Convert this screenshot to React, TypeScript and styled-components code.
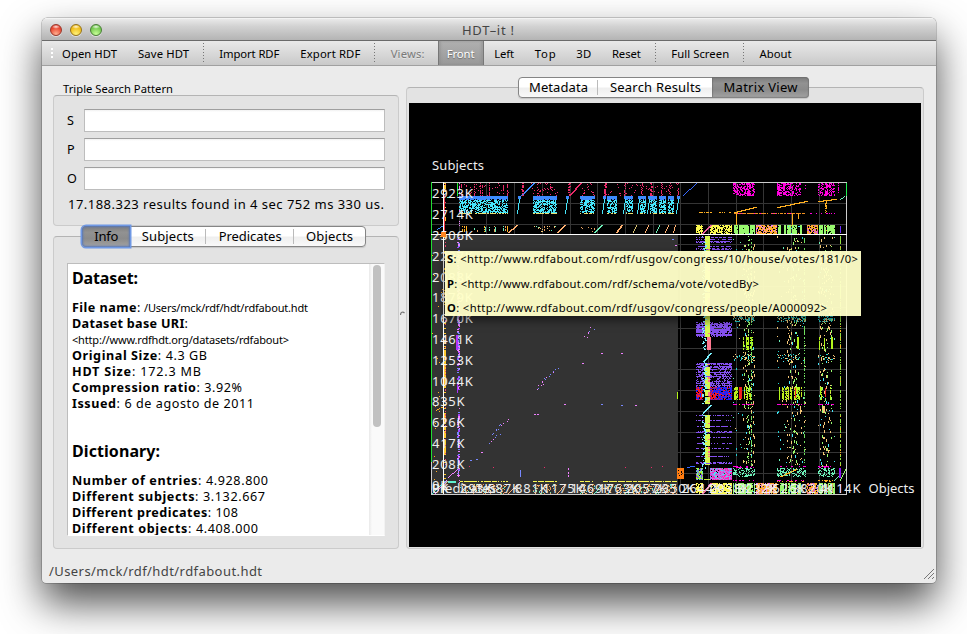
import React, { useLayoutEffect, useRef } from "react";
import styled, { createGlobalStyle } from "styled-components";

const Global = createGlobalStyle`
  * { box-sizing: border-box; }
  html, body { margin: 0; background: #fff; overflow: hidden; }
  body { font-family: "Noto Sans", "Open Sans", sans-serif; font-size: 13px; color: #000; }
`;

/* ---------- text spread to a given width ---------- */

const FitSpan = styled.span<{ $w: number }>`
  display: inline-block;
  width: ${(p) => p.$w}px;
  white-space: pre;
  flex: none;
`;

function Fit({ w, children }: { w: number; children: React.ReactNode }) {
  const ref = useRef<HTMLSpanElement>(null);
  useLayoutEffect(() => {
    const el = ref.current;
    if (!el) return;
    el.style.letterSpacing = "0px";
    const range = document.createRange();
    range.selectNodeContents(el);
    const natural = range.getBoundingClientRect().width;
    const n = (el.textContent || "").length;
    el.style.letterSpacing = `${(w - natural) / Math.max(1, n - 1)}px`;
  }, [w, children]);
  return (
    <FitSpan ref={ref} $w={w}>
      {children}
    </FitSpan>
  );
}

/* ---------- window frame ---------- */

const Desktop = styled.div`
  width: 967px;
  height: 634px;
  padding: 18px 0 0 42px;
  overflow: hidden;
  background: #fff;
`;

const Window = styled.div`
  width: 894px;
  height: 565px;
  display: flex;
  flex-direction: column;
  background: #ebebeb;
  border-radius: 5px 5px 4px 4px;
  overflow: hidden;
  box-shadow: 0 0 0 0.5px rgba(0, 0, 0, 0.35), 0 20px 40px rgba(0, 0, 0, 0.7);
`;

const TitleBar = styled.div`
  height: 23px;
  flex: none;
  display: grid;
  grid-template-columns: 420px auto;
  align-items: center;
  background: linear-gradient(#e9e9e9, #d2d2d2 35%, #b4b4b4);
  border-top: 1px solid #f3f3f3;
  border-bottom: 1px solid #6a6a6a;
  color: #444;
  font-size: 13px;
  line-height: 20px;
`;

const Lights = styled.div`
  display: flex;
  gap: 8px;
  padding: 1px 0 0 8px;
`;

const Light = styled.i<{ $c: string; $glow: string; $edge: string }>`
  width: 12px;
  height: 12px;
  border-radius: 50%;
  border: 1px solid ${(p) => p.$edge};
  background: radial-gradient(ellipse 4px 2px at 50% 18%, #fffd, #fff0),
    radial-gradient(circle at 50% 90%, ${(p) => p.$glow}, ${(p) => p.$c} 65%);
  box-shadow: 0 1px 0 #fff8;
`;

const ToolBar = styled.div`
  height: 25px;
  flex: none;
  display: flex;
  align-items: center;
  gap: 21px;
  padding-left: 10px;
  background: linear-gradient(#e9e9e9, #c9c9c9);
  border-bottom: 1px solid #a0a0a0;
  font-size: 11.3px;
  line-height: 20px;

  & > span {
    padding-top: 2px;
  }
`;

const Grip = styled.div`
  width: 4px;
  height: 12px;
  margin: 0 -13px 0 -2px;
  background: radial-gradient(circle, #fff 0.9px, transparent 1.2px) 0 0 / 4px 4px;
`;

const Separator = styled.div`
  width: 1px;
  height: 20px;
  margin: 0 -5.7px 0 -7px;
  background: repeating-linear-gradient(#777 0 1px, transparent 1px 3px);
`;

const ViewsLabel = styled.span`
  color: #7a7a7a;
  text-shadow: 0 1px #fff6;
`;

const PressedTool = styled.span`
  height: 24px;
  margin: 0 -9px 0 -8px;
  padding: 0 8px;
  line-height: 22px;
  color: #fff;
  text-shadow: 0 1px 1px #666;
  background: linear-gradient(#b0b0b0, #989898);
  border-left: 1px solid #777;
  border-right: 1px solid #777;
  box-shadow: inset 2px 0 2px #8886, inset -2px 0 2px #8886;
`;

const ViewButtons = styled.div`
  display: flex;
  gap: 20.6px;
  padding-top: 2px;
  margin: 0 0 0 -1.5px;
`;

const Body = styled.div`
  display: flex;
  height: 483px;
  flex: none;
  padding-left: 11px;
`;

const StatusBar = styled.div`
  flex: 1;
  display: flex;
  align-items: center;
  justify-content: space-between;
  padding: 9px 1px 0 7px;
  color: #444;
  font-size: 13px;
  line-height: 22px;
`;

const ResizeGrip = styled.svg`
  margin-top: 6px;
`;

/* ---------- panels ---------- */

const LeftColumn = styled.div`
  width: 346px;
  padding-top: 14px;
`;

const GroupTitle = styled.div`
  height: 15px;
  padding-left: 10px;
  font-size: 11.2px;
  line-height: 17px;
`;

const Panel = styled.div<{ $h: number; $pad: string }>`
  height: ${(p) => p.$h}px;
  padding: ${(p) => p.$pad};
  background: #e3e3e3;
  border: 1px solid #cbcbcb;
  border-top-color: #b4b4b4;
  border-radius: 4px;
`;

const Field = styled.label`
  display: flex;
  align-items: center;
  height: 23px;
  margin-bottom: 6px;
  line-height: 20px;
  font-size: 12.6px;
`;

const FieldName = styled.span`
  width: 17px;
`;

const Input = styled.input`
  width: 301px;
  height: 23px;
  padding: 0 4px;
  outline: none;
  border: 1px solid #bdbdbd;
  border-top-color: #9f9f9f;
  background: linear-gradient(#f1f1f1, #fff 2px);
`;

const Result = styled.div`
  height: 20px;
  line-height: 18px;
  margin-top: -1px;
  padding-left: 1px;
  font-size: 13px;
`;

const Tabs = styled.div<{ $ml: number; $w: number }>`
  position: relative;
  z-index: 1;
  display: flex;
  width: ${(p) => p.$w}px;
  height: 21px;
  margin: 0 0 -11px ${(p) => p.$ml}px;
  background: linear-gradient(#fff 45%, #efefef 55%, #f9f9f9);
  border: 1px solid #858585;
  border-radius: 4px;
  box-shadow: 0 1px 1px #0002;
  font-size: 13px;
  line-height: 19px;
`;

const Tab = styled.div<{ $w: number; $on?: boolean; $focus?: boolean; $line?: boolean }>`
  width: ${(p) => p.$w}px;
  height: ${(p) => (p.$on ? 21 : 19)}px;
  margin: ${(p) => (p.$on ? "-1px" : "0")};
  padding-top: ${(p) => (p.$on ? 1 : 0)}px;
  text-align: center;
  white-space: nowrap;
  background: ${(p) =>
    p.$on
      ? "linear-gradient(#7b7b7b, #929292 30%, #8b8b8b 60%, #a3a3a3)"
      : p.$line
      ? "linear-gradient(#bbb, #bbb) 100% 50% / 1px 15px no-repeat"
      : "none"};
  border-radius: ${(p) => (p.$on ? (p.$focus ? "4px 0 0 4px" : "0 4px 4px 0") : "0")};
  box-shadow: ${(p) =>
    p.$focus
      ? "0 0 0 1.5px #6f98e4, inset 0 0 2px 1px #5878b8"
      : p.$on
      ? "inset 0 0 1px 1px #6668"
      : "none"};
`;

const TextPane = styled.div`
  display: flex;
  height: 273px;
  width: 318px;
  overflow: hidden;
  background: #fff;
  border: 1px solid #bdbdbd;
  border-bottom-color: #fff;
  border-right-color: #f2f2f2;
`;

const Document = styled.div`
  flex: 1;
  padding: 3px 0 0 4px;
  overflow: hidden;
  font-size: 12.6px;
`;

const Heading = styled.div<{ $top: number; $bottom: number }>`
  height: 22px;
  margin: ${(p) => p.$top}px 0 ${(p) => p.$bottom}px;
  font-weight: 700;
  font-size: 16px;
  line-height: 22px;
`;

const Line = styled.div`
  height: 16px;
  line-height: 16px;
  white-space: nowrap;
`;

const Small = styled.span`
  font-size: 11px;
`;

const Track = styled.div`
  width: 15px;
  padding: 1px 4px;
  background: linear-gradient(90deg, #e9e9e9, #fafafa 3px, #fafafa);
`;

const Thumb = styled.div`
  width: 8px;
  height: 162px;
  border-radius: 4px;
  background: #c1c1c1;
`;

const Splitter = styled.div`
  width: 7px;
  display: flex;
  align-items: center;
  justify-content: center;
  padding-top: 11px;
`;

const RightColumn = styled.div`
  width: 518px;
  padding-top: 11px;
`;

const Viewport = styled.div`
  position: relative;
  width: 512px;
  height: 444px;
  background: #000;
`;

const Tooltip = styled.div`
  position: absolute;
  left: 36px;
  top: 148px;
  width: 416px;
  height: 65px;
  padding: 0 0 0 2px;
  display: flex;
  flex-direction: column;
  justify-content: space-between;
  background: rgba(255, 255, 200, 0.955);
  box-shadow: 0 4px 9px rgba(0, 0, 0, 0.55);
  font-size: 11.2px;
  line-height: 16px;
`;

const PlotText = styled.text`
  font-family: "Noto Sans", "Open Sans", sans-serif;
  font-size: 13px;
  fill: #eee;
`;

/* ---------- matrix plot ---------- */

function makeRandom(seed: number) {
  let s = seed;
  return () => {
    s = (s * 1664525 + 1013904223) >>> 0;
    return s / 4294967296;
  };
}

const GREEN = "#98f96e";
const CYAN = "#46e6fb";
const BLUE = "#3d8bff";
const CRIMSON = "#ea2a6a";
const PURPLE = "#8450ee";
const ORANGE = "#ffb022";
const MAGENTA = "#ff00dd";
const SAND = "#f5c878";
const LIME = "#b4f51c";
const MINT = "#6cf0b8";
const VIOLET = "#f080ff";
const PERI = "#7888ff";
const YELLOW = "#faf850";
const AQUA = "#22cfd0";

function buildPlot() {
  const rnd = makeRandom(77);
  const paths = new Map<string, string[]>();
  const dot = (x: number, y: number, c: string, w = 1, h = 1) => {
    if (!paths.has(c)) paths.set(c, []);
    paths.get(c)!.push(`M${x} ${y}h${w}v${h}h-${w}z`);
  };
  const pick = (cs: string[]) => cs[Math.floor(rnd() * cs.length)];
  const noise = (x0: number, x1: number, y0: number, y1: number, d: number, cs: string[]) => {
    for (let y = y0; y < y1; y++)
      for (let x = x0; x < x1; x++) if (rnd() < d) dot(x, y, pick(cs));
  };
  const columns = (x0: number, x1: number, y0: number, y1: number, p: number, d: number, cs: string[]) => {
    for (let x = x0; x < x1; x++) {
      if (rnd() > p) continue;
      const c = pick(cs);
      for (let y = y0; y < y1; y++) if (rnd() < d) dot(x, y, c);
    }
  };
  const rows = (x0: number, x1: number, y0: number, y1: number, p: number, d: number, cs: string[]) => {
    for (let y = y0; y < y1; y++) {
      if (rnd() > p) continue;
      const c = pick(cs);
      for (let x = x0; x < x1; x++) if (rnd() < d) dot(x, y, c);
    }
  };
  const diag = (x0: number, y0: number, x1: number, y1: number, c: string, w = 1, d = 1) => {
    const n = Math.max(Math.abs(x1 - x0), Math.abs(y1 - y0));
    for (let i = 0; i <= n; i++)
      if (rnd() < d) dot(Math.round(x0 + ((x1 - x0) * i) / n), Math.round(y0 + ((y1 - y0) * i) / n), c, w, 1);
  };

  // upper-left band
  const blocks = [
    [459, 508], [533, 557], [580, 595], [607, 617], [626, 633], [640, 646],
    [650, 657], [659, 666], [668, 674],
  ];
  for (const [a, b] of blocks) {
    dot(a, 196, BLUE, b - a, 3);
    noise(a, b, 199, 200, 0.75, [BLUE]);
    noise(a, b, 200, 213, 0.62, [CYAN]);
    rows(a, b, 213, 214, 1, 0.75, ["#e8e070"]);
  }
  for (const a of [517, 565, 602, 623, 637, 647, 676]) {
    dot(a + 1, 196, BLUE, 3, 3);
    diag(a, 213, a + 2, 199, CYAN);
  }
  for (const x of [461, 466, 474, 480, 482, 489, 497, 503, 507]) {
    for (let y = 183; y < 196; y++) if (rnd() < 0.62) dot(x, y, CRIMSON);
  }
  noise(460, 509, 183, 196, 0.03, [CRIMSON]);
  noise(531, 558, 183, 196, 0.12, [CRIMSON]);
  noise(582, 595, 183, 196, 0.12, [CRIMSON]);
  for (const [x, w] of [[521, 2], [568, 2], [604, 2], [624, 1], [641, 1], [650, 2], [661, 1], [669, 1], [677, 1]])
    for (let y = 183; y < 196; y++) if (rnd() < 0.75) dot(x + Math.floor(rnd() * 2), y, CRIMSON, w);
  noise(608, 677, 183, 196, 0.04, [CRIMSON]);
  diag(521, 195, 533, 183, BLUE, 2);
  diag(569, 195, 580, 183, CRIMSON, 2);
  columns(461, 508, 226, 232, 0.25, 0.7, ["#e8a060", ORANGE, MINT]);
  noise(534, 557, 226, 232, 0.14, ["#e8a060", MINT, SAND]);
  noise(581, 595, 227, 232, 0.12, ["#e8a060"]);
  const slants: [number, number, string][] = [
    [508, 8, "#ffb070"], [557, 7, "#ffb070"], [594, 7, MINT], [616, 5, "#ffb070"], [633, 3, "#d8c070"],
    [645, 3, "#ffb070"], [656, 3, MINT], [665, 3, "#ffb070"], [673, 2, "#ffb070"],
  ];
  for (const [x, w, c] of slants) {
    diag(x, 232, x + w, 225, c, w > 4 ? 2 : 1);
    diag(x, 493, x + w, 485, c, 1);
  }

  // upper-right band
  diag(683, 195, 696, 183, "#3768ff", 1);
  for (const [a, b] of [[733, 755], [777, 801], [818, 835]]) {
    noise(a, b, 183, 196, 0.36, [MAGENTA]);
    columns(a, b, 183, 196, 0.35, 0.6, [MAGENTA]);
  }
  columns(838, 839, 183, 193, 1, 0.6, [MAGENTA]);
  columns(805, 806, 183, 196, 1, 0.3, [MAGENTA]);
  diag(734, 212, 755, 207, ORANGE, 2);
  diag(777, 207, 806, 201, ORANGE, 2);
  diag(818, 201, 835, 199, ORANGE, 2);
  diag(840, 199, 844, 196, MINT);
  rows(697, 732, 212, 213, 1, 0.5, [ORANGE]);
  rows(734, 806, 213, 214, 1, 0.65, ["#f09020"]);
  rows(734, 835, 213, 214, 1, 0.25, [MAGENTA]);
  dot(736, 213, ORANGE, 1, 12);
  dot(792, 213, ORANGE, 1, 12);
  dot(798, 213, ORANGE, 1, 6);
  columns(825, 827, 200, 214, 1, 0.65, [ORANGE]);

  // recurring dense strips
  const strip = (y0: number, y1: number) => {
    noise(696, 703, y0, y1, 0.75, [YELLOW]);
    noise(710, 732, y0, y1, 0.77, [YELLOW]);
    diag(702, y1 - 1, 710, y0, "#f060a0", 2);
    for (const [a, b] of [[733, 755], [778, 802], [819, 835]]) {
      columns(a, b, y0, y1, 0.78, 0.93, [GREEN]);
      noise(a, b, y0, y1, 0.06, [ORANGE, CYAN]);
    }
    noise(756, 777, y0, y1, 0.86, ["#ffaa40", "#ffa048", ORANGE, ORANGE, VIOLET]);
    noise(807, 818, y0, y1, 0.75, ["#ffaa40", "#e060d0", ORANGE]);
    dot(840, y0 + 1, "#6a30ff", 1, y1 - y0 - 2);
  };
  strip(225, 234);
  strip(483, 494);

  // sparse column groups below the crosshair, broken into short runs
  const groups = [[733, 755], [777, 806], [818, 835]];
  for (const [a, b] of groups) {
    const core = a === 733 ? 743 : a === 777 ? 787 : 820;
    for (let x = a; x < b; x++) {
      const inCore = x >= core && x < core + 12;
      const c = inCore ? pick([SAND, SAND, SAND, GREEN]) : pick([MINT, AQUA, SAND]);
      let y = 236 + Math.floor(rnd() * 14);
      while (y < 466) {
        const run = 1 + Math.floor(rnd() * (inCore ? 3 : 2));
        if (rnd() < (inCore ? 0.6 : 0.3)) dot(x, y, rnd() < 0.15 ? CYAN : c, 1, run);
        y += run + 2 + Math.floor(rnd() * (inCore ? 13 : 22));
      }
    }
    noise(a, b, 316, 322, 0.42, [AQUA, AQUA, SAND]);
    noise(a, b, 354, 361, 0.2, [AQUA, SAND]);
    columns(a, b - 4, 387, 400, 0.65, 0.8, [LIME, LIME, LIME, "#c8e820"]);
    rows(a, b, 404, 405, 1, 0.5, [MAGENTA]);
    rows(a, b, 404, 405, 1, 0.3, [ORANGE]);
    rows(a, b, 466, 468, 0.8, 0.4, [MAGENTA]);
    noise(a, b, 468, 477, 0.4, [MINT]);
    rows(a, b, 480, 482, 0.9, 0.5, [MAGENTA, ORANGE]);
  }
  dot(739, 387, "#f02020", 3, 12);
  dot(795, 388, "#f02020", 1, 10);
  dot(825, 388, "#f02020", 1, 9);
  columns(741, 754, 337, 350, 0.5, 0.85, [LIME]);
  dot(797, 337, LIME, 2, 12);
  columns(819, 825, 337, 350, 0.6, 0.85, [LIME]);
  dot(831, 337, LIME, 2, 12);
  dot(822, 406, SAND, 3, 7);
  dot(800, 406, SAND, 1, 8);
  columns(751, 752, 236, 466, 1, 0.5, ["#70e060"]);
  columns(748, 749, 236, 466, 1, 0.35, [GREEN]);
  columns(804, 805, 236, 466, 1, 0.5, ["#70e060"]);
  columns(840, 841, 236, 466, 1, 0.6, ["#90e040"]);
  columns(840, 841, 236, 466, 1, 0.3, [ORANGE]);
  dot(839, 468, "#8b10f0", 2, 10);
  diag(834, 480, 839, 475, MINT);
  diag(840, 480, 846, 467, GREEN, 1);
  diag(780, 476, 796, 469, ORANGE, 2);

  // purple block family
  rows(696, 732, 235, 251, 0.6, 0.65, [PURPLE]);
  noise(696, 732, 322, 337, 0.5, [PURPLE]);
  rows(696, 732, 322, 337, 0.4, 0.85, [PURPLE]);
  noise(696, 732, 363, 387, 0.36, [PURPLE]);
  rows(696, 732, 363, 387, 0.35, 0.75, [PURPLE]);
  for (const y of [415, 420, 426, 431, 432, 437, 443, 448, 456, 462, 463]) rows(696, 732, y, y + 1, 1, 0.62, [PURPLE]);
  noise(696, 703, 387, 400, 0.9, ["#f91826", "#f91826", "#2020ff"]);
  noise(709, 716, 387, 400, 0.86, ["#f91826", "#f91826", "#2520f5"]);
  noise(716, 732, 387, 400, 0.86, ["#f91826", "#2520f5", "#2520f5", "#2520f5"]);
  noise(696, 703, 468, 480, 0.85, [MINT, PURPLE, LIME]);
  noise(710, 732, 468, 480, 0.96, ["#ff20b0", "#58d8f0", "#b070f0", "#e060e0"]);
  for (let y = 236; y < 465; y++) {
    if (y > 336 && y < 362) continue;
    if (y > 403 && y < 415) continue;
    if (rnd() < 0.92) dot(705, y, "#d8f850", 5, 1);
    if (rnd() < 0.18) dot(708, y, "#ff7888", 2, 1);
  }
  for (let y = 236; y < 470; y++) {
    if ((y > 349 && y < 362) || (y > 403 && y < 413)) continue;
    const x = 702 + Math.floor(rnd() * 4);
    if (rnd() < 0.8) dot(x, y, "#7af2ff", 1 + Math.floor(rnd() * 2), 1);
  }
  dot(707, 337, "#ff7890", 4, 13);
  diag(703, 361, 710, 353, "#7af2ff", 2);
  diag(703, 412, 710, 405, "#7af2ff", 2);
  dot(704, 479, "#c6e843", 6, 1);
  noise(677, 684, 468, 479, 0.88, ["#ff7c10"]);
  diag(684, 467, 694, 466, "#3768ff", 2, 0.6);
  dot(677, 392, LIME, 1, 7);

  // left columns
  for (let y = 183; y < 493; y++) {
    if (rnd() < 0.15) dot(459, y, VIOLET);
    const dense = (y > 349 && y < 388) || (y > 412 && y < 455);
    if (rnd() < (dense ? 0.95 : 0.2)) dot(444, y, "#ffc830", 2);
    if (rnd() < 0.12) dot(445, y, "#f04070");
  }
  for (let y = 236; y < 476; y++) {
    if (y > 390 && y < 412) continue;
    if (rnd() < 0.8) dot(457 + Math.floor(rnd() * 2), y, pick([PERI, "#a040ff", VIOLET]), 2);
  }
  dot(456, 335, "#b030ff", 2, 15);
  dot(457, 383, "#b030ff", 1, 10);
  dot(458, 469, VIOLET, 1, 8);
  dot(444, 195, "#f03040", 1, 36);
  dot(457, 183, "#20ee30", 1, 13);
  dot(448, 481, "#60f0d0", 8, 2);
  dot(447, 197, "#60f0c0", 5, 1);
  diag(434, 231, 443, 225, BLUE, 1, 0.7);
  diag(435, 410, 443, 406, ORANGE, 1, 0.7);
  diag(448, 477, 457, 469, VIOLET, 1);
  diag(432, 493, 444, 481, "#40f0d0");
  diag(435, 493, 446, 480, VIOLET, 1, 0.8);
  noise(432, 443, 236, 480, 0.009, [ORANGE]);

  // scattered trail inside the shaded area
  const trail: [number, number, number, number, number][] = [
    [583, 336, 593, 324, 7], [535, 386, 556, 365, 18], [491, 432, 507, 417, 11], [487, 441, 500, 430, 6],
  ];
  for (const [x0, y0, x1, y1, n] of trail)
    for (let i = 0; i < n; i++) {
      const t = i / n;
      dot(Math.round(x0 + (x1 - x0) * t + rnd() * 3), Math.round(y0 + (y1 - y0) * t + rnd() * 3), pick([PERI, VIOLET]));
    }
  for (const [x, y] of [[601, 353], [621, 353], [582, 363], [534, 414], [537, 414], [564, 404], [601, 404], [621, 405], [635, 405], [481, 452], [476, 459], [470, 460], [672, 239], [675, 245]])
    dot(x, y, pick([PERI, VIOLET]), 2, 1);
  for (const [x, y] of [[469, 466], [493, 467], [544, 467], [625, 467], [651, 467], [662, 466]]) dot(x, y, CRIMSON);
  dot(520, 470, PERI, 1, 7);
  columns(568, 569, 468, 477, 1, 0.7, [VIOLET]);

  // lower-left strip
  for (const [a, b] of [[460, 508], [533, 557], [580, 595], [603, 677]]) {
    rows(a, b, 481, 482, 1, 0.82, [YELLOW]);
    noise(a, b, 484, 494, 0.23, ["#f0a060", "#e89858", MINT, SAND]);
  }
  return [...paths].map(([c, d]) => ({ c, d: d.join("") }));
}

const PLOT = buildPlot();
const STEP_X = 415.5 / 15;
const STEP_Y = 312 / 15;
const LINES = Array.from({ length: 14 }, (_, i) => i + 1);
const Y_LABELS = ["0K", "208K", "417K", "626K", "835K", "1044K", "1253K", "1461K", "1670K", "1879K", "2088K", "2297K", "2506K", "2714K", "2923K"];
const X_LABELS = ["0K", "293K", "587K", "881K", "1175K", "1469K", "1763K", "2057K", "2350K", "2644K", "2938K", "3232K", "3526K", "3820K", "4114K"];
const labelWidth = (s: string) => (s.length - 1) * 8.2 + 8;

function MatrixPlot() {
  return (
    <svg width="512" height="444" viewBox="409 103 512 444" shapeRendering="crispEdges" display="block">
      {LINES.map((i) => (
        <React.Fragment key={i}>
          <rect x={Math.round(431 + i * STEP_X)} y="183" width="1" height="311" fill="#353535" />
          <rect x="432" y={Math.round(494 - i * STEP_Y)} width="414" height="1" fill="#353535" />
        </React.Fragment>
      ))}
      <rect x="432" y="235" width="246" height="259" fill="#333" />
      {PLOT.map((p) => (
        <path key={p.c} d={p.d} fill={p.c} />
      ))}
      <rect x="431" y="182" width="416" height="1" fill="#ccc" />
      <rect x="431" y="494" width="416" height="1" fill="#ccc" />
      <rect x="846" y="196" width="1" height="298" fill="#ccc" />
      <rect x="846" y="183" width="1" height="13" fill="#20ee50" />
      <rect x="431" y="182" width="1" height="280" fill="#22dd33" />
      <rect x="431" y="462" width="1" height="32" fill="#ccc" />
      {Y_LABELS.map((s, i) => (
        <PlotText key={s} x="432" y={489.5 - i * STEP_Y} textLength={labelWidth(s)}>{s}</PlotText>
      ))}
      {X_LABELS.map((s, i) => (
        <PlotText key={s} x={432 + i * STEP_X} y="493" textLength={labelWidth(s)}>{s}</PlotText>
      ))}
      <PlotText x="432" y="493" textLength="64">Predicates</PlotText>
      <PlotText x="432" y="170" textLength="52">Subjects</PlotText>
      <PlotText x="868.5" y="493" textLength="46">Objects</PlotText>
      <rect x="443" y="182" width="1" height="312" fill="#fff" />
      <rect x="431" y="234" width="416" height="1" fill="#fff" />
      <rect x="441" y="232" width="5" height="5" fill="#ff8420" />
    </svg>
  );
}

/* ---------- content ---------- */

const ENTRIES: [string, string, number][] = [
  ["Original Size", ": 4.3 GB", 135],
  ["HDT Size", ": 172.3 MB", 129],
  ["Compression ratio", ": 3.92%", 170],
  ["Issued", ": 6 de agosto de 2011", 182],
];

const COUNTS: [string, string, number][] = [
  ["Number of entries", ": 4.928.800", 196],
  ["Different subjects", ": 3.132.667", 193],
  ["Different predicates", ": 108", 166],
  ["Different objects", ": 4.408.000", 186],
];

const TRIPLE: [string, string, number][] = [
  ["S", ": <http://www.rdfabout.com/rdf/usgov/congress/10/house/votes/181/0>", 411],
  ["P", ": <http://www.rdfabout.com/rdf/schema/vote/votedBy>", 312],
  ["O", ": <http://www.rdfabout.com/rdf/usgov/congress/people/A000092>", 380],
];

export default function App() {
  return (
    <>
      <Global />
      <Desktop>
        <Window>
          <TitleBar>
            <Lights>
              <Light $c="#e8452f" $glow="#ffb090" $edge="#98382c" />
              <Light $c="#f0bd18" $glow="#fff27a" $edge="#94731c" />
              <Light $c="#74c850" $glow="#c8ff98" $edge="#4a7e38" />
            </Lights>
            <Fit w={52}>HDT–it !</Fit>
          </TitleBar>
          <ToolBar>
            <Grip />
            <Fit w={55}>Open HDT</Fit>
            <Fit w={51}>Save HDT</Fit>
            <Separator />
            <Fit w={60}>Import RDF</Fit>
            <Fit w={60}>Export RDF</Fit>
            <Separator />
            <ViewsLabel><Fit w={34}>Views:</Fit></ViewsLabel>
            <PressedTool><Fit w={28}>Front</Fit></PressedTool>
            <ViewButtons>
              <Fit w={20}>Left</Fit>
              <Fit w={21}>Top</Fit>
              <Fit w={15}>3D</Fit>
              <Fit w={29}>Reset</Fit>
            </ViewButtons>
            <Separator />
            <Fit w={58}>Full Screen</Fit>
            <Separator />
            <Fit w={32}>About</Fit>
          </ToolBar>
          <Body>
            <LeftColumn>
              <GroupTitle><Fit w={110}>Triple Search Pattern</Fit></GroupTitle>
              <Panel $h={131} $pad="13px 13px 0 13px">
                {["S", "P", "O"].map((n) => (
                  <Field key={n}>
                    <FieldName>{n}</FieldName>
                    <Input />
                  </Field>
                ))}
                <Result><Fit w={316}>17.188.323 results found in 4 sec 752 ms 330 us.</Fit></Result>
              </Panel>
              <Tabs $ml={29} $w={284}>
                <Tab $w={49} $on $focus><Fit w={24}>Info</Fit></Tab>
                <Tab $w={78} $line><Fit w={52}>Subjects</Fit></Tab>
                <Tab $w={89} $line><Fit w={63}>Predicates</Fit></Tab>
                <Tab $w={72}><Fit w={47}>Objects</Fit></Tab>
              </Tabs>
              <Panel $h={313} $pad="26px 13px 0 13px">
                <TextPane>
                  <Document>
                    <Heading $top={0} $bottom={11}><Fit w={66}>Dataset:</Fit></Heading>
                    <Line>
                      <Fit w={72}><b>File name</b>: </Fit>
                      <Small><Fit w={164}>/Users/mck/rdf/hdt/rdfabout.hdt</Fit></Small>
                    </Line>
                    <Line><Fit w={116}><b>Dataset base URI</b>:</Fit></Line>
                    <Line><Small><Fit w={217}>&lt;http://www.rdfhdt.org/datasets/rdfabout&gt;</Fit></Small></Line>
                    {ENTRIES.map(([k, v, w]) => (
                      <Line key={k}><Fit w={w}><b>{k}</b>{v}</Fit></Line>
                    ))}
                    <Heading $top={28} $bottom={11}><Fit w={88}>Dictionary:</Fit></Heading>
                    {COUNTS.map(([k, v, w]) => (
                      <Line key={k}><Fit w={w}><b>{k}</b>{v}</Fit></Line>
                    ))}
                  </Document>
                  <Track><Thumb /></Track>
                </TextPane>
              </Panel>
            </LeftColumn>
            <Splitter>
              <svg width="5" height="5" viewBox="0 0 5 5">
                <path d="M.5 4C.5 1 3 .5 4.5 2" fill="none" stroke="#777" strokeWidth="1.2" />
              </svg>
            </Splitter>
            <RightColumn>
              <Tabs $ml={112} $w={291}>
                <Tab $w={79} $line><Fit w={59}>Metadata</Fit></Tab>
                <Tab $w={115}><Fit w={91}>Search Results</Fit></Tab>
                <Tab $w={97} $on><Fit w={74}>Matrix View</Fit></Tab>
              </Tabs>
              <Panel $h={462} $pad="15px 2px 2px">
                <Viewport>
                  <MatrixPlot />
                  <Tooltip>
                    {TRIPLE.map(([k, v, w]) => (
                      <Fit key={k} w={w}><b>{k}</b>{v}</Fit>
                    ))}
                  </Tooltip>
                </Viewport>
              </Panel>
            </RightColumn>
          </Body>
          <StatusBar>
            <Fit w={213}>/Users/mck/rdf/hdt/rdfabout.hdt</Fit>
            <ResizeGrip width="12" height="12" viewBox="0 0 12 12">
              <path d="M1 11L11 1M5 11L11 5M9 11L11 9" stroke="#777" fill="none" />
            </ResizeGrip>
          </StatusBar>
        </Window>
      </Desktop>
    </>
  );
}
